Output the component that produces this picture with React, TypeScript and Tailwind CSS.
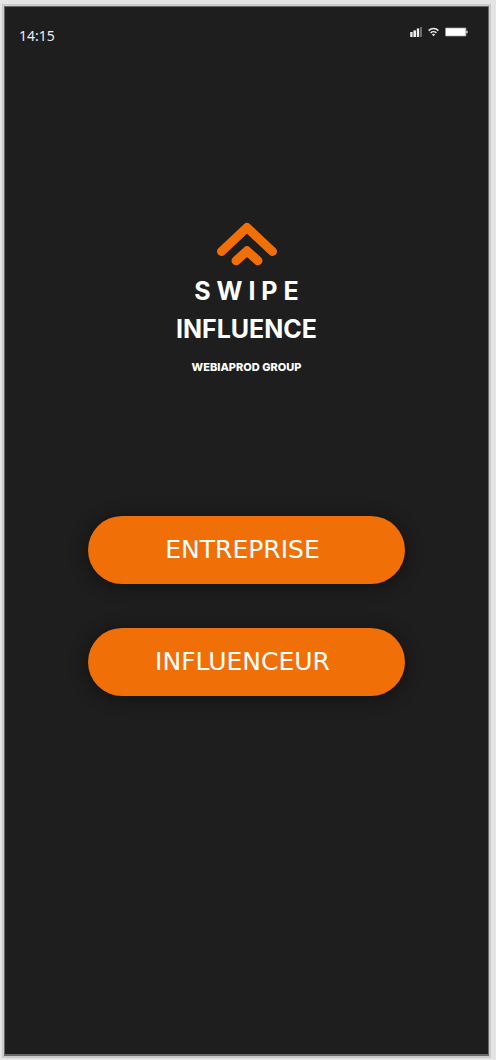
import React from "react";

function StatusBar() {
  return (
    <header className="flex items-start justify-between pt-[19px] pr-5 pl-[14px]">
      <time className="font-['Noto_Sans',sans-serif] text-sm leading-5 text-[#ececec]">14:15</time>
      <div className="flex h-3 items-center gap-[6px]">
        <svg aria-label="Signal" role="img" width="12" height="12" viewBox="0 0 12 12" className="text-[#ececec]">
          <rect x="0.2" y="6" width="2.4" height="5" fill="currentColor" />
          <rect x="3.4" y="4.4" width="2.6" height="6.6" fill="currentColor" />
          <rect x="6.8" y="2.4" width="2.4" height="8.6" fill="currentColor" />
          <rect x="10" y="1" width="2" height="10" fill="#6b6b6b" />
        </svg>
        <svg aria-label="Wi-Fi" role="img" width="11" height="10" viewBox="0 0 11 10" fill="none" stroke="#ececec" strokeWidth="1.5">
          <path d="M.6 3.6a7 7 0 0 1 9.8 0" />
          <path d="M2.6 5.9a4.2 4.2 0 0 1 5.8 0" />
          <path d="M3.9 7.4a2.4 2.4 0 0 1 3.2 0L5.5 9.2z" fill="#ececec" stroke="none" />
        </svg>
        <svg aria-label="Battery" role="img" width="23" height="10" viewBox="0 0 23 10">
          <rect x="0" y="0.5" width="21.5" height="9" rx="1" fill="#777" />
          <rect x="0.8" y="1.2" width="19.8" height="7.6" fill="#fff" />
          <path d="M21.4 3.6q1.4.3 1.4 1.4t-1.4 1.4z" fill="#ececec" />
        </svg>
      </div>
    </header>
  );
}

function Logo() {
  return (
    <div className="flex flex-col items-center text-center font-['Inter',sans-serif] text-white">
      <svg
        aria-hidden="true"
        width="64"
        height="44"
        viewBox="0 0 64 44"
        fill="none"
        stroke="#f06f07"
        strokeWidth="9"
        strokeLinecap="round"
        strokeLinejoin="round"
      >
        <path d="M7.5 29.5 33 5.5l25.5 24" />
        <path d="M22 38.8 33 28.8l11 10" />
      </svg>
      <h1 className="mt-[6px] text-[25px] leading-[38px] font-bold">
        <span className="block">S W I P E</span>
        <span className="block">INFLUENCE</span>
      </h1>
      <p className="mt-[9px] text-[11px] leading-5 font-extrabold">WEBIAPROD GROUP</p>
    </div>
  );
}

function RoleButton({ children }: { children: React.ReactNode }) {
  return (
    <button
      type="button"
      className="h-[68px] w-full cursor-pointer rounded-full bg-[#f06f07] pr-2 font-['DejaVu_Sans',sans-serif] text-[25px] leading-9 text-white shadow-[0_2px_16px_4px_rgba(0,0,0,0.3)]"
    >
      {children}
    </button>
  );
}

export default function App() {
  return (
    <div className="flex min-h-screen flex-col bg-[#e4e4e4] pt-1 pr-[5px] pb-[2px] pl-[2px]">
      <div className="flex grow flex-col border-2 border-[#cbcbcb]">
        <div className="flex grow flex-col border border-b-2 border-[#6a6868] bg-[#1e1e1e]">
          <StatusBar />
          <main className="flex flex-col items-center px-4 pt-[176px] pb-16">
            <Logo />
            <nav aria-label="Profil" className="mt-[139px] flex w-full max-w-[317px] flex-col gap-[44px]">
              <RoleButton>ENTREPRISE</RoleButton>
              <RoleButton>INFLUENCEUR</RoleButton>
            </nav>
          </main>
        </div>
      </div>
    </div>
  );
}
